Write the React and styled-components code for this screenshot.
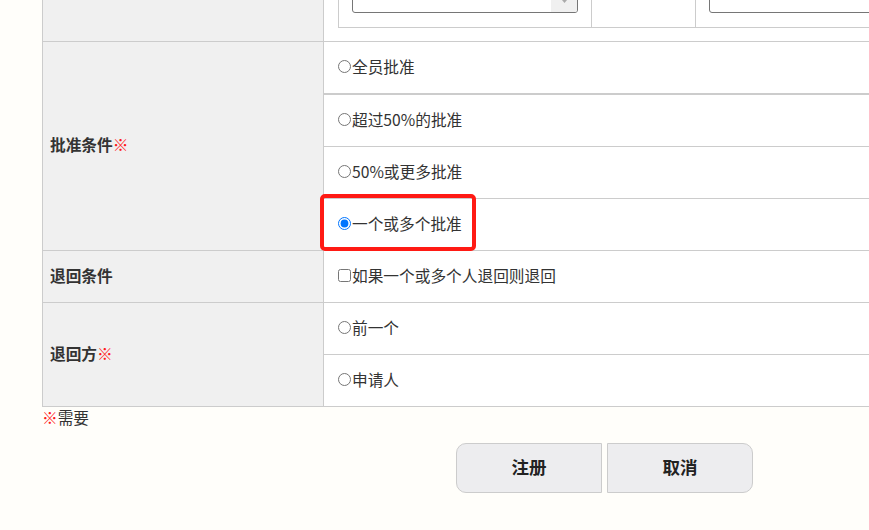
import React from "react";
import styled, { createGlobalStyle } from "styled-components";

const GlobalStyle = createGlobalStyle`
  html, body {
    margin: 0;
    padding: 0;
    background: #fffefa;
    overflow: hidden;
  }
  body {
    font-family: "Noto Sans CJK SC", "Noto Sans", sans-serif;
    font-size: 15.7px;
    color: #333;
  }
`;

const Page = styled.div`
  padding-left: 42px;
  width: 1125px;
`;

const Table = styled.div`
  display: flex;
  flex-direction: column;
  width: 1125px;
  border-left: 1px solid #ccc;
  border-bottom: 1px solid #ccc;
`;

const Row = styled.div`
  display: flex;
  border-top: ${(p) => (p.$first ? "none" : "1px solid #ccc")};
  height: ${(p) => (p.$height ? `${p.$height}px` : "auto")};
  overflow: ${(p) => (p.$height ? "hidden" : "visible")};
`;

const HeadCell = styled.div`
  width: 281px;
  flex-shrink: 0;
  background: #f0f0f0;
  border-right: 1px solid #ccc;
  display: flex;
  align-items: center;
  padding: 0 0 3px 7px;
  box-sizing: border-box;
  font-weight: bold;
  color: #333;
`;

const Required = styled.span`
  color: #ff1a1a;
  font-weight: normal;
`;

const BodyCell = styled.div`
  flex: 1;
  display: flex;
  flex-direction: column;
  background: #fff;
`;

const SubRow = styled.div`
  position: relative;
  border-top: ${(p) =>
    p.$first ? "none" : p.$thick ? "2px solid #ccc" : "1px solid #ccc"};
  display: flex;
  align-items: center;
  padding: 0 0 2px 14px;
  box-sizing: border-box;
  height: ${(p) => (p.$first ? 51 : p.$thick ? 53 : 52)}px;
`;

const Option = styled.label`
  display: flex;
  align-items: center;
  line-height: 20px;
  color: #333;
  input {
    margin: 0 1px 0 0;
    width: 13px;
    height: 13px;
  }
`;

const Highlight = styled.div`
  position: absolute;
  left: -4px;
  top: -5px;
  width: 156px;
  height: 57px;
  border: 4px solid #ff1a14;
  border-radius: 5px;
  box-sizing: border-box;
  pointer-events: none;
`;

/* partially scrolled-off row at the top */
const TopCell = styled.div`
  flex: 1;
  background: #fff;
  display: flex;
  align-items: flex-end;
  padding: 0 0 13px 14px;
`;

const Nested = styled.div`
  display: flex;
  border-left: 1px solid #ccc;
  border-bottom: 1px solid #ccc;
  height: 60px;
  flex: 1;
`;

const NestedCol = styled.div`
  width: ${(p) => p.$w}px;
  flex: ${(p) => (p.$grow ? 1 : "none")};
  border-right: ${(p) => (p.$grow ? "none" : "1px solid #ccc")};
  display: flex;
  align-items: flex-end;
  padding: 0 13px 14px 13px;
  box-sizing: border-box;
`;

const SelectBox = styled.div`
  flex: 1;
  height: 30px;
  border: 1px solid #767676;
  border-radius: 3px;
  background: #fff;
  display: flex;
  justify-content: flex-end;
  overflow: hidden;
`;

const SelectArrow = styled.div`
  width: 26px;
  background: #f0f0f0;
  display: flex;
  align-items: flex-end;
  justify-content: center;
  padding-bottom: 9px;
  box-sizing: border-box;
`;

const Note = styled.div`
  line-height: 22px;
  height: 36px;
  color: #333;
`;

const ButtonBar = styled.div`
  display: flex;
  justify-content: center;
  gap: 5px;
  width: 1125px;
`;

const Button = styled.button`
  width: 146px;
  height: 50px;
  border: 1px solid #ccc;
  background: #ededef;
  font-family: "Noto Sans CJK SC", "Noto Sans", sans-serif;
  font-size: 17.5px;
  font-weight: bold;
  color: #222;
  padding: 0 0 3px;
  border-radius: ${(p) => (p.$side === "left" ? "10px 0 0 10px" : "0 10px 10px 0")};
  cursor: pointer;
`;

export default function App() {
  return (
    <>
      <GlobalStyle />
      <Page>
        <Table>
          <Row $first $height={41}>
            <HeadCell />
            <TopCell>
              <Nested>
                <NestedCol $w={253}>
                  <SelectBox>
                    <SelectArrow>
                      <svg width="5" height="3" viewBox="0 0 5 3">
                        <path d="M0 0h5L2.5 3z" fill="#aaa" />
                      </svg>
                    </SelectArrow>
                  </SelectBox>
                </NestedCol>
                <NestedCol $w={104} />
                <NestedCol $grow>
                  <SelectBox />
                </NestedCol>
              </Nested>
            </TopCell>
          </Row>

          <Row>
            <HeadCell>
              批准条件<Required>※</Required>
            </HeadCell>
            <BodyCell>
              <SubRow $first>
                <Option>
                  <input type="radio" name="approve" />
                  全员批准
                </Option>
              </SubRow>
              <SubRow $thick>
                <Option>
                  <input type="radio" name="approve" />
                  超过50%的批准
                </Option>
              </SubRow>
              <SubRow>
                <Option>
                  <input type="radio" name="approve" />
                  50%或更多批准
                </Option>
              </SubRow>
              <SubRow>
                <Option>
                  <input type="radio" name="approve" defaultChecked />
                  一个或多个批准
                </Option>
                <Highlight />
              </SubRow>
            </BodyCell>
          </Row>

          <Row>
            <HeadCell>退回条件</HeadCell>
            <BodyCell>
              <SubRow $first>
                <Option>
                  <input type="checkbox" />
                  如果一个或多个人退回则退回
                </Option>
              </SubRow>
            </BodyCell>
          </Row>

          <Row>
            <HeadCell>
              退回方<Required>※</Required>
            </HeadCell>
            <BodyCell>
              <SubRow $first>
                <Option>
                  <input type="radio" name="back" />
                  前一个
                </Option>
              </SubRow>
              <SubRow>
                <Option>
                  <input type="radio" name="back" />
                  申请人
                </Option>
              </SubRow>
            </BodyCell>
          </Row>
        </Table>

        <Note>
          <Required>※</Required>需要
        </Note>

        <ButtonBar>
          <Button $side="left">注册</Button>
          <Button $side="right">取消</Button>
        </ButtonBar>
      </Page>
    </>
  );
}
